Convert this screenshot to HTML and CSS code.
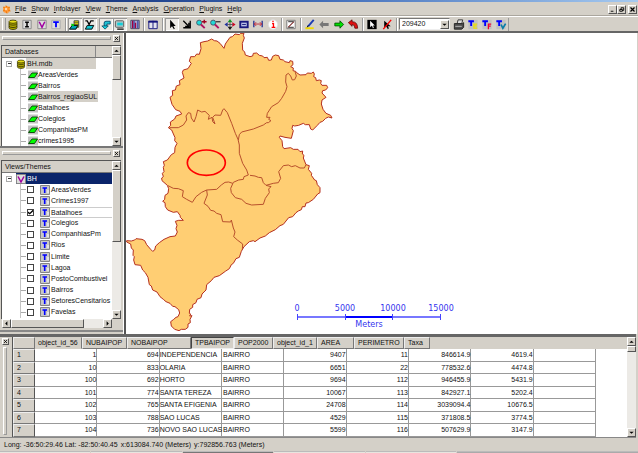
FILE: index.html
```html
<!DOCTYPE html>
<html lang="pt">
<head>
<meta charset="utf-8">
<title>BH.mdb</title>
<link rel="stylesheet" href="styles.css">
</head>
<body>
<svg class="defs" aria-hidden="true">
  <symbol id="db" viewBox="0 0 14 14"><path d="M2 4v7c0 3 10 3 10 0V4" fill="#b0a800" stroke="#333000"/><ellipse cx="7" cy="3.500" rx="5" ry="2" fill="#e6dc18" stroke="#333000"/><path d="M2 6c1 2.500 9 2.500 10 0M2 9c1 2.500 9 2.500 10 0" fill="none" stroke="#333000"/></symbol>
  <symbol id="layer" viewBox="0 0 10 9"><path d="M0 0h10v9H0z" fill="#c3c3c3"/><path d="M.5 7 4 2.500h5.500L6.500 7z" fill="#0f0" stroke="#064006" stroke-width=".9"/></symbol>
  <symbol id="t" viewBox="0 0 10 10"><path d="M.5.5h9v9h-9z" fill="#c8c8c8" stroke="#858585"/><path d="M2.500 3h4.500M4.700 3v5" stroke="#00f" stroke-width="1.600"/><path d="M8 5v3" stroke="#fff"/></symbol>
  <symbol id="up" viewBox="0 0 8 8"><path d="M1.500 5.500h5L4 3z"/></symbol>
  <symbol id="down" viewBox="0 0 8 8"><path d="M1.500 3h5L4 5.500z"/></symbol>
  <symbol id="x" viewBox="0 0 7 7"><path d="M1.500 1.500l4 4M5.500 1.500l-4 4" stroke="#000" stroke-width="1.200"/></symbol>
</svg>
<div class="titlebar"></div>
<header class="menubar">
  <svg class="logo" viewBox="0 0 9 9"><circle cx="4.500" cy="4.500" r="3.500" fill="#ff9b3d"/><path d="M1 2l2 1M4 .5l1 2M8 2L6 3M8.500 6L6 5M5 8.500L4 6M1 6l2-1" stroke="#f07808"/><circle cx="4" cy="4" r="1" fill="#ffe9c8"/></svg>
  <nav class="menu">
    <a href="#"><u>F</u>ile</a><a href="#"><u>S</u>how</a><a href="#"><u>I</u>nfolayer</a><a href="#"><u>V</u>iew</a><a href="#"><u>T</u>heme</a><a href="#"><u>A</u>nalysis</a><a href="#"><u>O</u>peration</a><a href="#"><u>P</u>lugins</a><a href="#"><u>H</u>elp</a>
  </nav>
  <div class="winbtns">
    <button aria-label="Minimize"><svg viewBox="0 0 8 7"><path d="M2 5.500h3" stroke="#000"/></svg></button><button aria-label="Restore"><svg viewBox="0 0 8 7"><path d="M3.500 3V1.500h3v3H5M2 3.500h3v2H2z" fill="none" stroke="#000"/></svg></button><button class="apart" aria-label="Close"><svg viewBox="0 0 7 7"><use href="#x"/></svg></button>
  </div>
</header>
<div class="toolbar">
  <i class="grip"></i>
  <div class="group n4">
    <button aria-label="Database"><svg viewBox="0 0 14 14"><use href="#db" x="1" y="1" width="12" height="12"/></svg></button>
    <button aria-label="Infolayer"><svg viewBox="0 0 14 14"><path d="M2.500 2.500h9v9h-9z" fill="#ddd" stroke="#888"/><path d="M5 4.500h4M5 9.500h4M7 4v6" stroke="#000" stroke-width="1.600"/></svg></button>
    <button aria-label="View"><svg viewBox="0 0 14 14"><path d="M2.500 2.500h9v9h-9z" fill="#ddd" stroke="#888"/><path d="M4 4l3 6 3-6" fill="none" stroke="#a000a0" stroke-width="1.600"/></svg></button>
    <button aria-label="Theme"><svg viewBox="0 0 14 14"><path d="M2.500 2.500h9v9h-9z" fill="#ddd" stroke="#aaa"/><path d="M4 4.500h6M7 4.500V10" stroke="#00f" stroke-width="2"/></svg></button>
  </div>
  <i class="sep"></i>
  <div class="group n2">
    <button class="down" aria-label="Databases panel"><svg viewBox="0 0 14 14"><path d="M6 3h5v7H6z" fill="#d8d000" stroke="#444"/><path d="M6 5h5M6 7h5" stroke="#444" stroke-width=".7"/><path d="M1 12l3-4h6l-2 4z" fill="#00a8b8" stroke="#000"/><path d="M3 7l3 1" stroke="#0c0" stroke-width="2"/></svg></button>
    <button class="down" aria-label="Views panel"><svg viewBox="0 0 14 14"><path d="M2 3h2l2 4 2-4h3" fill="none" stroke="#000" stroke-width="1.400"/><path d="M2 12l2-4h7l-2 4z" fill="#10c4d0" stroke="#000"/></svg></button>
  </div>
  <i class="sep small"></i>
  <div class="group n3">
    <button class="down" aria-label="Grid"><svg viewBox="0 0 14 14"><path d="M5 9V5.500Q5 3.500 7 3.500h4.500v3H8V9" fill="#21c2d2" stroke="#075070"/><path d="M2.500 8.500h7L6 12z" fill="#19d6e6" stroke="#064050" stroke-width=".8"/></svg></button>
    <button class="down" aria-label="Display"><svg viewBox="0 0 14 14"><rect x="2" y="3" width="9" height="7" rx="1" fill="#b7c8c8" stroke="#555"/><path d="M4 5h6v3H4z" fill="#13cfd9"/><path d="M4 12h7" stroke="#222" stroke-width="1.500"/></svg></button>
    <button aria-label="Graphic"><svg viewBox="0 0 14 14"><path d="M2.500 2.500h9v9h-9z" fill="#aaa8d0" stroke="#446"/><path d="M4.500 3v8M7.500 5v6" stroke="#a00040" stroke-width="1.500"/><path d="M6 3v8M10 3v8" stroke="#2230a0"/></svg></button>
  </div>
  <i class="sep mid"></i>
  <div class="group n1"><button aria-label="Tile"><svg viewBox="0 0 14 14"><path d="M2.500 3.500h9v8h-9zM7 3v8" fill="#e4e4ee" stroke="#13137c"/><path d="M2 4h10" stroke="#13137c" stroke-width="2"/></svg></button></div>
  <i class="sep"></i>
  <div class="group n8">
    <button class="down" aria-label="Pointer"><svg viewBox="0 0 14 14"><path d="M5 2v9l2-2 2 3 1-.5L8.500 8.500H11z"/></svg></button>
    <button aria-label="Zoom area"><svg viewBox="0 0 14 14"><path d="M3 3l5 5M10.500 3v7.500H3M9 5v4H5" fill="none" stroke="#000" stroke-width="1.400"/></svg></button>
    <button aria-label="Zoom in"><svg viewBox="0 0 14 14"><circle cx="5" cy="5" r="2.700" fill="#20d8d8" stroke="#456"/><path d="M7 7l4 4" stroke="#b01060" stroke-width="2"/><path d="M8 4h5M10.500 2v4" stroke="#a00020" stroke-width="1.500"/></svg></button>
    <button aria-label="Zoom out"><svg viewBox="0 0 14 14"><circle cx="5" cy="5" r="2.700" fill="#20d8d8" stroke="#456"/><path d="M7 7l4 4" stroke="#b01060" stroke-width="2"/><path d="M8 4h5" stroke="#444" stroke-width="1.500"/></svg></button>
    <button aria-label="Pan"><svg viewBox="0 0 14 14"><path d="M7 1l2.500 3.500h-5z" fill="#0a9a20"/><path d="M7 13l2.500-3.500h-5z" fill="#111"/><path d="M1 7l3.500-2.500v5z" fill="#2030a0"/><path d="M13 7L9.500 4.500v5z" fill="#d00020"/><path d="M4 7h6M7 4v6" stroke="#555"/></svg></button>
    <button aria-label="Full extent"><svg viewBox="0 0 14 14"><rect x="2" y="3" width="10" height="8" fill="#17177e"/><path d="M4 5h6v4H4z" fill="#b8bfe4"/><path d="M5 7h4" stroke="#17177e"/></svg></button>
    <button aria-label="Distance"><svg viewBox="0 0 14 14"><path d="M2.500 3v7M11.500 3v7" stroke="#223090" stroke-width="1.400"/><path d="M3 6.500h8M5 4.500l-2 2 2 2M9 4.500l2 2-2 2" fill="none" stroke="#c02838"/></svg></button>
    <button aria-label="Info"><svg viewBox="0 0 14 14"><circle cx="7" cy="7" r="5" fill="#fff" stroke="#ddd"/><path d="M6 6h1.500v4M5.500 10h4M7 3v1.500" fill="none" stroke="red" stroke-width="1.400"/></svg></button>
  </div>
  <i class="sep mid"></i>
  <div class="group n1"><button aria-label="Edit"><svg viewBox="0 0 14 14"><path d="M2.500 2.500h9v9h-9z" fill="#fff" stroke="#777"/><path d="M4 4h6L4 10h6" fill="none" stroke="#222"/><path d="M4 10l6-6" stroke="#b03030"/></svg></button></div>
  <i class="sep"></i>
  <div class="group n4">
    <button aria-label="Draw"><svg viewBox="0 0 14 14"><path d="M11 2L5 9" stroke="#1c3bb2" stroke-width="2"/><path d="M2 11h9" stroke="#f2d900" stroke-width="2"/><path d="M4 10l1-2" stroke="#000"/></svg></button>
    <button aria-label="Previous"><svg viewBox="0 0 14 14"><path d="M2 7l4-4v2.500h6v3H6V11z" fill="#777"/></svg></button>
    <button aria-label="Next"><svg viewBox="0 0 14 14"><path d="M12 7L8 3v2.500H2.500v3H8V11z" fill="#00e000" stroke="#035003" stroke-width=".9"/></svg></button>
    <button aria-label="Undo"><svg viewBox="0 0 14 14"><path d="M2 5l4-3v2q6 0 6 7H9q0-4-3-4v2z" fill="#e01010" stroke="#500" stroke-width=".8"/></svg></button>
  </div>
  <i class="sep"></i>
  <div class="group n2">
    <button aria-label="Select"><svg viewBox="0 0 14 14"><path d="M2 2h10v10H2z"/><path d="M5 3v7l2-2 1 3 1-.5L8 8h2z" fill="#fff"/></svg></button>
    <button aria-label="Unselect"><svg viewBox="0 0 14 14"><path d="M4 3v8l2-2 2 3 1-1-1-2h3z"/><path d="M11.500 2L3 12" stroke="red" stroke-width="1.500"/></svg></button>
  </div>
  <i class="sep"></i>
  <div class="combo"><select aria-label="Scale"><option>209420</option></select><span class="btn"><svg viewBox="0 0 8 8"><use href="#down"/></svg></span></div>
  <div class="group n4">
    <button aria-label="Print"><svg viewBox="0 0 14 14"><path d="M5 6l1-4h5l-1 4" fill="#ddd" stroke="#333"/><path d="M2 6h9l1-1v5l-2 2H2z" fill="#4c4c4c" stroke="#222"/><path d="M3 9h7" stroke="#bbb"/></svg></button>
    <button aria-label="Edit text"><svg viewBox="0 0 14 14"><path d="M2 2h10v10H2z" fill="#c0c0c0"/><path d="M2 3.500h6M5 3v5.500" stroke="#00f" stroke-width="2"/><path d="M8 6v5h3.500M8 8.500h3M8 6.500h3.500" stroke="#eee000" fill="none" stroke-width="1.400"/></svg></button>
    <button aria-label="Text font"><svg viewBox="0 0 14 14"><path d="M2 2h10v10H2z" fill="#c0c0c0"/><path d="M2 3.500h6M5 3v5.500" stroke="#00f" stroke-width="2"/><path d="M8.500 6v6M8 8.800h3M8 6.500h3.500" stroke="#f00030" fill="none" stroke-width="1.400"/></svg></button>
    <button aria-label="View text"><svg viewBox="0 0 14 14"><path d="M2 2h10v10H2z" fill="#c0c0c0"/><path d="M2 3.500h6M5 3v5.500" stroke="#00f" stroke-width="2"/><path d="M7 7l2 4 3-5" stroke="#087ca8" fill="none" stroke-width="1.800"/></svg></button>
  </div>
</div>
<main class="work">
  <aside class="side">
    <section class="dock first">
      <div class="dockbar"><i></i><button aria-label="Close databases"><svg viewBox="0 0 7 7"><use href="#x"/></svg></button></div>
      <div class="pane">
        <div class="content">
          <h2 class="colhead split">Databases</h2>
          <div class="clip">
          <ul class="tree dbs">
            <li class="root"><i class="box"></i><svg viewBox="0 0 14 14"><use href="#db"/></svg><span>BH.mdb</span></li>
            <li><svg><use href="#layer"/></svg><span>AreasVerdes</span></li>
            <li><svg><use href="#layer"/></svg><span>Bairros</span></li>
            <li class="current"><svg><use href="#layer"/></svg><span>Bairros_regiaoSUL</span></li>
            <li><svg><use href="#layer"/></svg><span>Batalhoes</span></li>
            <li><svg><use href="#layer"/></svg><span>Colegios</span></li>
            <li><svg><use href="#layer"/></svg><span>CompanhiasPM</span></li>
            <li><svg><use href="#layer"/></svg><span>crimes1995</span></li>
          </ul>
          </div>
        </div>
        <div class="vscroll"><span class="btn"><svg><use href="#up"/></svg></span><span class="thumb a"></span><span class="btn end"><svg><use href="#down"/></svg></span></div>
      </div>
    </section>
    <section class="dock second">
      <div class="dockbar"><i></i><button aria-label="Close views"><svg viewBox="0 0 7 7"><use href="#x"/></svg></button></div>
      <div class="pane">
        <div class="content">
          <h2 class="colhead">Views/Themes</h2>
          <div class="clip">
          <ul class="tree views">
            <li class="root"><i class="box"></i><svg viewBox="0 0 10 10"><path d="M.5.5h9v9h-9z" fill="#ddd" stroke="#888"/><path d="M2 2.500L5 8l3-5.500" fill="none" stroke="#a000a0" stroke-width="1.500"/></svg><span>BH</span></li>
            <li><label><input type="checkbox"><svg><use href="#t"/></svg><span>AreasVerdes</span></label></li>
            <li><label><input type="checkbox"><svg><use href="#t"/></svg><span>Crimes1997</span></label></li>
            <li class="active"><label><input type="checkbox" checked><svg><use href="#t"/></svg><span>Batalhoes</span></label></li>
            <li><label><input type="checkbox"><svg><use href="#t"/></svg><span>Colegios</span></label></li>
            <li><label><input type="checkbox"><svg><use href="#t"/></svg><span>CompanhiasPm</span></label></li>
            <li><label><input type="checkbox"><svg><use href="#t"/></svg><span>Rios</span></label></li>
            <li><label><input type="checkbox"><svg><use href="#t"/></svg><span>Limite</span></label></li>
            <li><label><input type="checkbox"><svg><use href="#t"/></svg><span>Lagoa</span></label></li>
            <li><label><input type="checkbox"><svg><use href="#t"/></svg><span>PostoCombustivel</span></label></li>
            <li><label><input type="checkbox"><svg><use href="#t"/></svg><span>Bairros</span></label></li>
            <li><label><input type="checkbox"><svg><use href="#t"/></svg><span>SetoresCensitarios</span></label></li>
            <li><label><input type="checkbox"><svg><use href="#t"/></svg><span>Favelas</span></label></li>
          </ul>
          </div>
        </div>
        <div class="vscroll"><span class="btn"><svg><use href="#up"/></svg></span><span class="thumb b"></span><span class="btn end"><svg><use href="#down"/></svg></span></div>
      </div>
      <div class="hscroll"><span class="btn"><svg viewBox="0 0 8 8"><path d="M5 1.500v5L2.500 4z"/></svg></span><span class="thumb"></span><span class="btn end"><svg viewBox="0 0 8 8"><path d="M3 1.500v5L5.500 4z"/></svg></span></div>
    </section>
  </aside>
  <section class="map">
    <svg class="region" viewBox="18 9 630 894">
      <path class="land" d="M312 55L316 42 320 36 330 22 337 20 345 12 358 14 362 10 372 10 370 16 373 24 367 40 368 60 374 66 376 75 390 80 398 78 400 70 410 69 418 76 428 78 432 83 442 82 446 91 454 90 458 79 466 75 476 77 480 88 490 90 495 95 508 98 510 92 518 94 519 104 512 110 520 114 519 122 527 124 530 128 540 135 558 134 562 129 574 130 580 126 583 132 581 140 587 143 589 152 598 150 604 152 602 160 606 166 620 166 623 173 617 180 608 182 606 189 618 202 606 210 604 222 609 238 618 250 632 256 636 264 625 261 617 265 608 274 600 277 592 286 578 300 572 297 568 284 556 284 550 280 536 286 524 288 518 286 516 296 520 302 514 325 495 322 480 318 478 322 486 332 488 350 492 356 512 353 520 358 534 358 540 365 548 363 547 372 552 376 550 384 558 404 568 407 565 418 575 430 574 436 584 450 589 452 592 464 600 473 600 488 593 492 580 508 565 518 558 519 555 530 547 530 544 539 535 543 528 548 518 560 506 563 490 583 480 587 466 599 448 608 436 618 420 624 405 635 400 632 388 635 372 650 364 664 358 682 348 686 340 700 334 704 328 716 316 724 298 737 282 742 274 752 260 764 258 780 246 792 243 803 231 808 228 818 218 824 218 832 209 838 208 850 212 852 209 858 216 857 210 868 211 878 204 882 204 892 196 898 184 898 177 902 164 898 154 888 152 875 160 869 168 862 174 860 179 849 176 839 165 830 158 829 150 820 138 815 130 808 120 800 111 786 98 780 94 768 88 764 84 742 76 728 68 720 62 706 45 704 41 690 43 680 39 676 40 660 34 654 32 642 20 636 20 632 34 633 44 630 48 626 66 628 74 632 80 644 92 658 98 664 104 660 107 648 118 638 132 628 150 620 166 618 172 606 168 596 171 586 166 574 176 571 190 571 181 562 180 556 172 545 160 547 143 540 136 530 135 518 128 514 134 508 135 496 144 490 146 476 142 466 126 452 125 444 130 440 127 430 132 425 130 412 133 406 130 395 142 390 154 374 164 368 165 352 171 340 164 332 165 323 155 300 145 293 152 286 151 276 164 267 168 258 185 252 180 244 167 239 156 223 150 202 158 196 157 182 166 180 169 168 180 164 178 152 192 144 187 127 190 120 204 116 214 100 208 94 212 80 224 80 230 72 238 73 243 56 241 38 252 35 263 33 275 27 283 32 291 33 300 40Z"/>
      <path class="border" d="M525 124L529 138 524 149 517 150 512 138 505 130 498 135 497 156 501 170 497 184 485 205 475 218 455 230 442 250 440 262 450 262 446 268 453 272 445 278 440 278 430 285 400 297 365 306 358 314 355 330M148 293L175 293 190 285 200 270 198 258 205 248 212 250 214 264 222 276 228 260 233 240 245 246 255 244 268 256 265 268 276 262 278 275 285 282 278 262 285 255 302 256 308 240 312 236 322 248 335 280 346 310 354 328 358 345 358 370 368 400 380 420 385 435 372 440 370 448 356 450 340 457 332 475 334 488 346 503 365 508 378 520 395 525 430 523 436 505 448 488 446 477 453 470 438 466 430 458 425 443 415 442 405 438 390 436M438 466L460 460 475 458 482 445 476 425 490 407 505 405 515 410 526 407 540 414 553 414 558 404M144 467L160 475 175 476 190 482 187 500 200 508 217 517 228 500 245 487 260 480 290 478 304 465 315 457 326 456 338 460M260 480L262 495 252 520 264 529 272 541 282 543 290 550 303 554 308 575 332 576 334 570 340 594 345 606 341 620 352 630 368 642 367 660"/>
      <ellipse cx="259" cy="398" rx="57" ry="38"/>
    </svg>
    <div class="scale">
      <div class="nums"><span>0</span><span>5000</span><span>10000</span><span>15000</span></div>
      <div class="bar"><i></i><i></i><i></i></div>
      <div class="unit">Meters</div>
    </div>
  </section>
</main>
<section class="grid">
  <div class="gridbar"><button aria-label="Close grid"><svg viewBox="0 0 7 7"><use href="#x"/></svg></button><i></i></div>
  <table>
    <thead><tr><th class="w22"></th><th class="w47 flat">object_id_56</th><th class="w45">NUBAIPOP</th><th class="w64">NOBAIPOP</th><th class="w43 pressed">TPBAIPOP</th><th class="w39">POP2000</th><th class="w44">object_id_1</th><th class="w37">AREA</th><th class="w50">PERIMETRO</th><th class="w26">Taxa</th></tr></thead>
    <tbody>
      <tr><th>1</th><td>1</td><td>694</td><td>INDEPENDENCIA</td><td>BAIRRO</td><td>9407</td><td>11</td><td>846614.9</td><td>4619.4</td><td></td></tr>
      <tr><th>2</th><td>10</td><td>833</td><td>OLARIA</td><td>BAIRRO</td><td>6651</td><td>22</td><td>778532.6</td><td>4474.8</td><td></td></tr>
      <tr><th>3</th><td>100</td><td>692</td><td>HORTO</td><td>BAIRRO</td><td>9694</td><td>112</td><td>946455.9</td><td>5431.9</td><td></td></tr>
      <tr><th>4</th><td>101</td><td>774</td><td>SANTA TEREZA</td><td>BAIRRO</td><td>10067</td><td>113</td><td>842927.1</td><td>5202.4</td><td></td></tr>
      <tr><th>5</th><td>102</td><td>765</td><td>SANTA EFIGENIA</td><td>BAIRRO</td><td>24708</td><td>114</td><td>3039094.4</td><td>10676.5</td><td></td></tr>
      <tr><th>6</th><td>103</td><td>788</td><td>SAO LUCAS</td><td>BAIRRO</td><td>4529</td><td>115</td><td>371808.5</td><td>3774.5</td><td></td></tr>
      <tr><th>7</th><td>104</td><td>736</td><td>NOVO SAO LUCAS</td><td>BAIRRO</td><td>5599</td><td>116</td><td>507629.9</td><td>3147.9</td><td></td></tr>
    </tbody>
  </table>
  <div class="vscroll"><span class="btn"><svg><use href="#up"/></svg></span><span class="thumb c"></span><span class="btn end"><svg><use href="#down"/></svg></span></div>
</section>
<footer class="status"><span>Long: -36:50:29.46 Lat: -82:50:40.45</span><span>x:613084.740 (Meters)</span><span>y:792856.763 (Meters)</span></footer>
<div class="taskbar"><i></i><i></i><i class="dark"></i><i></i><i></i><i class="rest"></i></div>
</body>
</html>
```
FILE: styles.css
```css
* { box-sizing: border-box; }
body {
  margin: 0;
  height: 100vh;
  display: flex;
  flex-direction: column;
  overflow: hidden;
  background: #d4d0c8;
  color: #111;
  font: 7px/10px "Liberation Sans", sans-serif;
}
svg { display: block; }
.defs { position: absolute; width: 0; height: 0; }
button { padding: 0; border: 0; background: none; font: inherit; }

.titlebar { flex: none; height: 2px; background: linear-gradient(90deg, #0a246a, #3f6bb8 50%, #a6caf0); }

.menubar { flex: none; height: 14px; display: flex; align-items: center; border-bottom: 1px solid #aaa69e; padding: 1px 1px 0 2px; }
.logo { width: 9px; height: 9px; margin-right: 4px; }
.menu { display: flex; gap: 5px; flex: 1; }
.menu a { color: #111; text-decoration: none; }
.winbtns { display: flex; }
.winbtns button, .dockbar button, .gridbar button, .btn, .thumb {
  background: #d4d0c8;
  border: 1px solid;
  border-color: #fff #555 #555 #fff;
}
.winbtns button { width: 9px; height: 9px; }
.winbtns .apart { margin-left: 2px; }
.winbtns svg { width: 7px; height: 7px; }

.toolbar { flex: none; height: 17px; display: flex; align-items: center; border-top: 1px solid #fff; border-bottom: 2px solid #666; }
.grip { width: 4px; height: 12px; margin: 0 0 0 2px; border-left: 1px solid #fff; border-right: 1px solid #999; }
.group { display: grid; grid-auto-flow: column; grid-auto-columns: 1fr; justify-items: center; }
.group:last-child { border-right: 1px solid #999; }
.n1 { width: 14px; }
.n2 { width: 29px; }
.n3 { width: 43px; }
.n4 { width: 57px; }
.n8 { width: 115px; }
.group button { width: 14px; height: 13px; }
.group svg { width: 14px; height: 13px; }
.group .down { background: #ece9e4; box-shadow: inset 1px 1px #999, inset -1px -1px #fff; }
.sep { width: 5px; height: 13px; background: linear-gradient(90deg, #999 50%, #fff 50%) center / 2px 13px no-repeat; }
.sep.mid { width: 4px; }
.sep.small { width: 2px; background: none; }
.combo { display: flex; align-items: center; width: 51px; height: 12px; margin-right: 2px; background: #fff; border: 1px solid #777; border-right-color: #eee; border-bottom-color: #eee; }
.combo select { flex: 1; min-width: 0; height: 10px; appearance: none; border: 0; padding: 0 0 0 2px; background: none; font: inherit; color: #111; }
.btn { flex: none; display: block; width: 9px; height: 9px; }
.btn svg { width: 7px; height: 7px; }

.work { flex: 1; min-height: 0; display: flex; }
.side { flex: none; width: 124px; display: flex; flex-direction: column; padding-bottom: 2px; border-right: 1px solid #fff; }
.dock { display: flex; flex-direction: column; min-height: 0; }
.dock.first { flex: none; height: 115px; border-bottom: 2px solid #777; }
.dock.second { flex: 1; border-bottom: 2px solid #888; padding-bottom: 2px; }
.dockbar { flex: none; height: 12px; display: flex; align-items: center; gap: 2px; padding: 0 3px 2px 2px; }
.dockbar i { flex: 1; height: 4px; border: 1px solid; border-color: #fff #999 #999 #fff; }
.dockbar button { width: 7px; height: 7px; }
.dockbar svg { width: 5px; height: 5px; }
.pane { flex: 1; min-height: 0; display: flex; margin: 0 2px 0 1px; background: #fff; border-top: 1px solid #555; border-left: 1px solid #555; }
.content { flex: 1; min-width: 0; display: flex; flex-direction: column; }
.colhead { flex: none; margin: 0; height: 12px; padding-left: 3px; font: inherit; line-height: 11px; background: #d4d0c8; border-bottom: 1px solid #777; }
.colhead.split { background: linear-gradient(90deg, #888, #888) 93px 0 / 1px 12px no-repeat #d4d0c8; }
.clip { flex: 1; min-height: 0; overflow: hidden; }
.tree { list-style: none; margin: 0; padding: 0; display: grid; grid-auto-rows: 1fr; }
.dbs { height: 89px; }
.views { height: 145px; }
.tree li { display: flex; align-items: center; min-height: 0; margin-left: 18px; border-left: 1px solid #c4c4c4; white-space: nowrap; }
.tree svg { flex: none; width: 10px; height: 10px; }
.tree li:not(.root)::before { content: ""; flex: none; width: 5px; height: 1px; background: #aaa; }
.dbs li:not(.root) svg { margin-left: 2px; }
.tree .root { margin-left: 4px; border: 0; }
.box { flex: none; width: 6px; height: 6px; margin-right: 4px; border: 1px solid #aaa; background: linear-gradient(#333, #333) center / 3px 1px no-repeat #fff; }
.tree .root span { flex: 1; line-height: 11px; }
.dbs .root { padding-right: 16px; }
.dbs .root span { background: #d4d0c8; padding-left: 1px; }
.dbs .current span { background: #d4d0c8; line-height: 11px; padding-right: 1px; }
.views .root { background: linear-gradient(#0a246a, #0a246a) 10px 0 no-repeat; color: #fff; }
.views .root span { padding-left: 1px; }
.views label { flex: 1; display: flex; align-items: center; }
.views input { appearance: none; flex: none; width: 7px; height: 7px; margin: 0 6px 0 1px; border: 1px solid #444; background: #fff; }
.views input:checked::before { content: ""; display: block; width: 5px; height: 5px; background: #000; clip-path: polygon(0 40%, 35% 65%, 100% 0, 100% 40%, 35% 100%, 0 75%); }
.views label span { padding-left: 1px; flex: 1; line-height: 10px; }
.views .active span { border: 1px solid #ccc; border-width: 1px 0; line-height: 9px; }

.vscroll { flex: none; width: 9px; display: flex; flex-direction: column; background: #eceae6; }
.hscroll { flex: none; height: 9px; display: flex; margin: 0 11px 0 2px; background: #eceae6; }
.end { margin-top: auto; }
.hscroll .end { margin: 0 0 0 auto; }
.thumb.a { height: 25px; }
.thumb.b { height: 72px; }
.thumb.c { height: 6px; }
.hscroll .thumb { width: 73px; }

.map { flex: 1; position: relative; overflow: hidden; margin-right: 1px; background: #fff; border-left: 2px solid #555; }
.region { width: 210px; height: 298px; }
.land { fill: #ffce73; stroke: #b53020; stroke-width: 3; }
.border { fill: none; stroke: #b8502c; stroke-width: 3; }
.region ellipse { fill: none; stroke: #f00; stroke-width: 5; }
.scale { position: absolute; left: 147px; bottom: 4px; width: 192px; color: #3434ee; font: 8px/10px "DejaVu Sans", sans-serif; text-align: center; }
.nums { display: grid; grid-template-columns: repeat(4, 1fr); }
.bar { display: grid; grid-template-columns: repeat(3, 1fr); height: 6px; margin: 0 24px; border-right: 1px solid #44f; }
.bar i { border-left: 1px solid #44f; background: linear-gradient(#77f, #77f) 0 2px / 100% 2px no-repeat; }
.bar i:nth-child(2) { background-image: linear-gradient(#00f, #00f); }

.grid { flex: none; height: 104px; display: flex; border-top: 3px solid #666; border-bottom: 1px solid #888; margin-right: 2px; }
.gridbar { flex: none; width: 12px; display: flex; flex-direction: column; align-items: center; gap: 2px; padding: 1px 2px 2px 0; }
.gridbar button { width: 7px; height: 7px; }
.gridbar svg { width: 5px; height: 5px; }
.gridbar i { flex: 1; width: 4px; border: 1px solid; border-color: #fff #999 #999 #fff; }
table { flex: 1; min-width: 0; display: flex; flex-direction: column; background: #fff; border-left: 1px solid #555; }
thead { flex: none; display: block; background: #d4d0c8; }
thead tr { display: flex; height: 12px; }
th { font-weight: 400; text-align: left; background: #d4d0c8; white-space: nowrap; }
thead th { flex: none; padding: 0 0 0 3px; line-height: 10px; border: 1px solid; border-color: #eee #777 #777 #eee; }
thead th.flat { border-color: #d4d0c8 #777 #d4d0c8 #d4d0c8; padding-left: 2px; }
thead th.pressed { border-color: #444 #eee #eee #444; }
.w22 { width: 22px; }
.w26 { width: 26px; }
.w37 { width: 37px; }
.w39 { width: 39px; }
.w43 { width: 43px; }
.w44 { width: 44px; }
.w45 { width: 45px; }
.w47 { width: 47px; }
.w50 { width: 50px; }
.w64 { width: 64px; }
tbody { flex: 1; min-height: 0; display: grid; grid-auto-rows: 1fr; margin-right: 31px; }
tbody tr { display: grid; grid-template-columns: 22px repeat(9, minmax(0, 1fr)); min-height: 0; }
tbody th { padding: 0 0 0 3px; line-height: 10px; border: 1px solid; border-color: #eee #555 #777 #eee; }
td { padding: 1px 0 0; line-height: 10px; text-align: right; white-space: nowrap; border-right: 1px solid #999; border-bottom: 1px solid #999; }
td:nth-child(4), td:nth-child(5) { text-align: left; }
td:nth-child(5) { padding-left: 1px; }

.status { flex: none; height: 13px; display: flex; gap: 3px; align-items: center; padding-left: 4px; }
.taskbar { flex: none; height: 2px; display: flex; gap: 1px; }
.taskbar i { flex: 1; background: #e8e5df; border-top: 1px solid #bbb; }
.taskbar .dark { background: #777; }
.taskbar .rest { flex: 2; background: #aaa; }
```
